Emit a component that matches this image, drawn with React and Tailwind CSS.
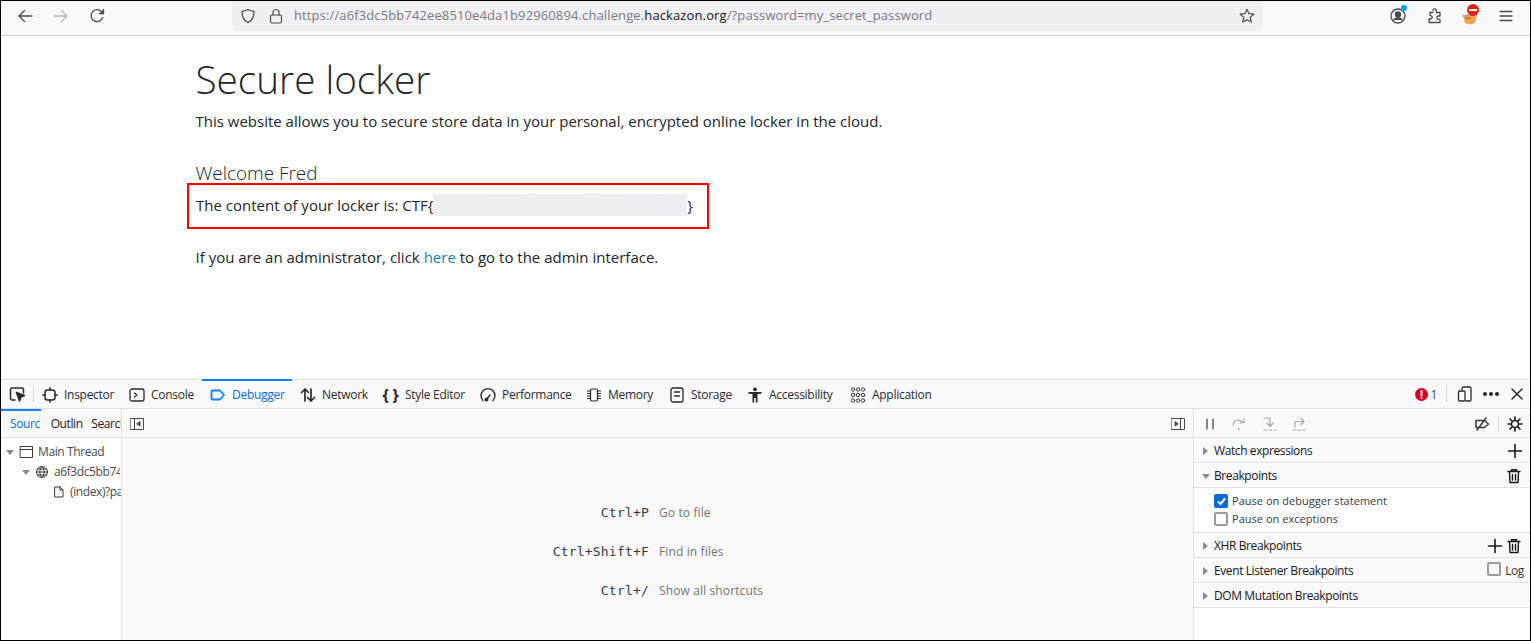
import React from "react";

const S = ({ w = 16, h = 16, c = "#4a4a4f", sw = 1.3, vb, className = "", children }) => (
  <svg width={w} height={h} viewBox={vb || `0 0 ${w} ${h}`} fill="none" stroke={c} strokeWidth={sw} strokeLinecap="round" strokeLinejoin="round" className={`shrink-0 ${className}`}>
    {children}
  </svg>
);

const Tab = ({ icon, label, active, w }) => (
  <div className={`relative flex h-full items-center gap-[5px] shrink-0 pt-[1px] ${active ? "text-[#0a6cd6]" : "text-[#2a2a2e]"}`} style={{ width: w }}>
    {active && <div className="absolute -top-px left-0 right-0 h-[2px] bg-[#0a84ff]" />}
    <div className="ml-[7px] flex w-[17px] justify-center">{icon}</div>
    <span className="ml-[1px] whitespace-nowrap">{label}</span>
  </div>
);

const Arrow = ({ open }) => (
  <svg width="8" height="8" viewBox="0 0 8 8" className="shrink-0">
    {open ? <path d="M0 2h8L4 7z" fill="#8a8a8d" /> : <path d="M1 0v8l5-4z" fill="#8a8a8d" />}
  </svg>
);

const Section = ({ open, label, children, className = "" }) => (
  <div className={`flex h-[25px] items-center border-b border-[#e0e0e2] bg-[#f9f9fa] pl-[8px] pt-[1px] ${className}`}>
    <Arrow open={open} />
    <span className="ml-[4px] flex-1 text-[#18181a]">{label}</span>
    {children}
  </div>
);

const Plus = () => (
  <S w={16} h={16} c="#18181a" sw={1.6}><path d="M8 1.500v13M1.500 8h13" /></S>
);
const Trash = () => (
  <S w={14} h={16} c="#18181a" sw={1.4}>
    <path d="M1 3.500h12M4.500 3V1.800h5V3M2.500 4l.5 10.500h8L11.500 4M5.500 6.500v5.500M8.500 6.500v5.500" />
  </S>
);

const Shortcut = ({ k, d }) => (
  <div className="flex h-[39px] items-center">
    <span className="w-[527px] text-right font-['DejaVu_Sans_Mono',monospace] text-[13px] tracking-[0.2px] text-[#38383d]">{k}</span>
    <span className="ml-[10px] tracking-[0.12px] text-[#737373]">{d}</span>
  </div>
);

export default function App() {
  return (
    <div className="flex h-[641px] w-[1531px] flex-col overflow-hidden border border-black bg-white font-['Open_Sans',sans-serif]">
      {/* browser toolbar */}
      <div className="flex h-[35px] shrink-0 items-start border-b border-[#cfcfd3] bg-[#f9f9fb]">
        <div className="flex h-[30px] items-center pl-[16px]">
          <S><path d="M15 8H2M7.500 2.500 2 8l5.500 5.500" /></S>
          <S c="#b5b5b9" className="ml-[20px]"><path d="M1 8h13M8.500 2.500 14 8l-5.500 5.500" /></S>
          <S className="ml-[20px]"><path d="M13.800 9.500A6 6 0 1 1 12.500 3.500L14 5" /><path d="M14.500 1.500V5.500H10.500" fill="#4a4a4f" /></S>
        </div>
        <div className="ml-[127px] flex h-[30px] w-[1031px] items-center rounded-b-[5px] bg-[#f0f0f4] pl-[8px] pr-[8px]">
          <S><path d="M8 1.500c2 1.200 4 1.700 6 1.800C14 9 12.500 12.800 8 14.700 3.500 12.800 2 9 2 3.300c2-.1 4-.6 6-1.800z" /></S>
          <S className="ml-[12px]" sw={1.2}><rect x="2.500" y="7" width="11" height="8" rx="1.500" /><path d="M5 7V4.500a3 3 0 0 1 6 0V7" /></S>
          <div className="ml-[10px] flex-1 whitespace-nowrap text-[13px] tracking-[0.12px] text-[#7a7a80]">
            https://a6f3dc5bb742ee8510e4da1b92960894.challenge.<span className="text-[#15141a]">hackazon.org</span>/?password=my_secret_password
          </div>
          <S sw={1.2}><path d="M8 1.300l2 4.400 4.800.5-3.600 3.200 1 4.700L8 11.700l-4.200 2.400 1-4.700L1.200 6.200 6 5.700z" /></S>
        </div>
        <div className="flex h-[30px] items-center">
          <div className="relative ml-[127px]">
            <S><circle cx="8" cy="8" r="7" /><circle cx="8" cy="6.500" r="2.500" fill="#4a4a4f" /><path d="M3.800 12c1-1.800 2.500-2.300 4.200-2.300s3.200.5 4.200 2.300" fill="#4a4a4f" /></S>
            <div className="absolute -right-[1px] -top-[3px] h-[6px] w-[6px] rounded-full bg-[#0a9cff]" />
          </div>
          <S className="ml-[21px]"><path d="M6 2.500a1.700 1.700 0 0 1 3.400 0V4.500H13V8h-1.500a1.700 1.700 0 0 0 0 3.400H13v3.100H2V11h1.500a1.700 1.700 0 0 0 0-3.400" /><path d="M3 7.500V4.500h3" /></S>
          <div className="relative ml-[19px] h-[16px] w-[16px]">
            <svg width="16" height="14" viewBox="0 0 16 14" className="absolute left-0 top-[3px]">
              <path d="M1 4l7-1 7 1-2 8-5 1.500L3 12z" fill="#f2a04c" />
              <path d="M0 5l15-1" stroke="#9a9a9a" strokeWidth="0.800" />
              <path d="M4 7h5" stroke="#8a5a2a" strokeWidth="1" />
            </svg>
            <div className="absolute left-[5px] -top-[4px] flex h-[12px] w-[12px] items-center justify-center rounded-full bg-[#e2231a]">
              <div className="h-[2px] w-[8px] bg-white" />
            </div>
          </div>
          <S className="ml-[20px]" c="#4a4a4f" sw={1.3}><path d="M2 3.500h12M2 8h12M2 12.500h12" /></S>
        </div>
      </div>

      {/* page */}
      <div className="h-[343px] shrink-0 bg-white pl-[194.500px] text-[#212529]">
        <h1 className="mt-[16px] text-[38.700px] font-light leading-[54px]">Secure locker</h1>
        <p className="mt-[3px] text-[15px] leading-[24px]">This website allows you to secure store data in your personal, encrypted online locker in the cloud.</p>
        <h4 className="mt-[26px] text-[18.900px] font-light leading-[28px]">Welcome Fred</h4>
        <div className="-ml-[8.500px] mt-[-4px] flex h-[46px] w-[522px] items-center whitespace-nowrap border-2 border-[#ff0000] pb-[2px] pl-[7px] text-[15px]">
          <span>The content of your locker is: CTF{"{"}</span>
          <div className="h-[22px] w-[254px] shrink-0 bg-gradient-to-r from-[#eceef0] via-[#eff0f1] to-[#ebeef2]" />
          <span>{"}"}</span>
        </div>
        <p className="mt-[16px] text-[15px] leading-[24px]">
          If you are an administrator, click <span className="text-[#1084b4]">here</span> to go to the admin interface.
        </p>
      </div>

      {/* devtools */}
      <div className="flex min-h-0 flex-1 flex-col border-t border-[#e0e0e2] bg-[#f9f9fa] text-[12px]">
        <div className="flex h-[29px] shrink-0 items-center border-b border-[#e0e0e2] tracking-[-0.28px]">
          <div className="flex h-full w-[32px] items-center pl-[8px]">
            <S sw={1.5} c="#2a2a2e"><path d="M6 14H3a1.500 1.500 0 0 1-1.500-1.500v-9A1.500 1.500 0 0 1 3 2h10a1.500 1.500 0 0 1 1.500 1.500V7" /><path d="M7.500 6.500l8 3-3.500 1.500-1.500 4z" fill="#2a2a2e" /></S>
          </div>
          <div className="h-[16px] w-px bg-[#d7d7db]" />
          <div className="flex h-full w-[168px]">
            <Tab w={87} label="Inspector" icon={<S c="#2a2a2e" sw={1.500}><rect x="3" y="3" width="10" height="10" rx="2.500" /><path d="M8 .800V3M8 13v2.200M.800 8H3M13 8h2.200" /></S>} />
            <Tab w={81} label="Console" icon={<S c="#2a2a2e" sw={1.300}><rect x="1" y="2" width="14" height="12" rx="2" /><path d="M5.500 6l2.500 2-2.500 2" /></S>} />
          </div>
          <Tab w={90} active label="Debugger" icon={<S c="#0a84ff" sw={1.800}><path d="M2.500 3.500h7.500L14 8l-4 4.500H2.500a1.200 1.200 0 0 1-1-1V4.500a1.200 1.200 0 0 1 1-1z" /></S>} />
          <Tab w={83} label="Network" icon={<S c="#2a2a2e" sw={1.700}><path d="M5 14V2M1.500 5.500 5 2l3.500 3.500M11 2v12M7.500 10.500 11 14l3.500-3.500" /></S>} />
          <Tab w={97} label="Style Editor" icon={<span className="text-[16px] font-bold leading-none text-[#2a2a2e]">{"{ }"}</span>} />
          <Tab w={106} label="Performance" icon={<S c="#2a2a2e" sw={1.400}><path d="M3 13.500A7 7 0 1 1 13 13.500" /><path d="M6.500 12.500 10 8" /><circle cx="6.500" cy="12.500" r="1.300" fill="#2a2a2e" /></S>} />
          <Tab w={83} label="Memory" icon={<S c="#2a2a2e" sw={1.200}><rect x="4.500" y="2" width="7" height="12" rx="1.500" /><path d="M1.500 4h3M1.500 6.500h3M1.500 9h3M1.500 11.500h3M11.500 4h3M11.500 6.500h3M11.500 9h3M11.500 11.500h3" /></S>} />
          <Tab w={78} label="Storage" icon={<S c="#2a2a2e" sw={1.300}><rect x="2" y="1" width="12" height="14" rx="2" /><path d="M5.500 5h5M5.500 9h5" /></S>} />
          <Tab w={103} label="Accessibility" icon={<svg width="16" height="16" viewBox="0 0 16 16" fill="#2a2a2e"><circle cx="8" cy="2.300" r="1.900" /><path d="M1.500 5h13v1.800L10.500 7v8.500H8.800V11H7.200v4.500H5.500V7L1.500 6.800z" /></svg>} />
          <Tab w={90} label="Application" icon={<S c="#2a2a2e" sw={0.900}>{[2.500, 8, 13.500].flatMap((y) => [3, 8, 13].map((x) => <circle key={`${x}-${y}`} cx={x} cy={y} r="1.700" />))}</S>} />
          <div className="flex-1" />
          <div className="mr-[9px] flex items-center pt-[1px]">
            <svg width="13" height="13" viewBox="0 0 13 13" className="shrink-0"><circle cx="6.500" cy="6.500" r="6.500" fill="#d70022" /><path d="M6.500 2.800v4.600" stroke="#fff" strokeWidth="2" strokeLinecap="round" /><circle cx="6.500" cy="10" r="1.100" fill="#fff" /></svg>
            <span className="ml-[2px] text-[#4a4a4f]">1</span>
          </div>
          <div className="h-[16px] w-px bg-[#d7d7db]" />
          <S c="#2a2a2e" sw={1.300} className="ml-[10px]"><path d="M5 3.500V2.500A1.500 1.500 0 0 1 6.500 1h6A1.500 1.500 0 0 1 14 2.500v11a1.500 1.500 0 0 1-1.500 1.500H9" /><rect x="1.500" y="5" width="6.500" height="10" rx="1" /></S>
          <div className="ml-[10px] flex gap-[2px]">
            <div className="h-[4px] w-[4px] rounded-full bg-[#2a2a2e]" /><div className="h-[4px] w-[4px] rounded-full bg-[#2a2a2e]" /><div className="h-[4px] w-[4px] rounded-full bg-[#2a2a2e]" />
          </div>
          <S c="#2a2a2e" sw={1.500} w={12} h={12} className="ml-[12px] mr-[7px]"><path d="M1 1l10 10M11 1 1 11" /></S>
        </div>

        <div className="flex min-h-0 flex-1">
          {/* sources */}
          <div className="flex w-[121px] shrink-0 flex-col border-r border-[#e0e0e2]">
            <div className="relative flex h-[29px] shrink-0 items-center overflow-hidden border-b border-[#e0e0e2] pt-[1px] tracking-[-0.4px]">
              <div className="absolute left-0 top-0 h-[2px] w-[40px] bg-[#0a84ff]" />
              <span className="ml-[9px] w-[41px] overflow-hidden text-[#0a6cd6]">Sourc</span>
              <span className="w-[41px] overflow-hidden text-[#18181a]">Outlin</span>
              <span className="w-[30px] overflow-hidden whitespace-nowrap text-[#18181a]">Search</span>
            </div>
            <div className="flex-1 overflow-hidden bg-white pt-[4px] tracking-[-0.4px] text-[#4a4a4f]">
              <div className="flex h-[20px] items-center pl-[5px]">
                <Arrow open />
                <S sw={1} c="#38383d" className="ml-[5px]"><rect x="1.500" y="2.500" width="12" height="11" /><path d="M1.500 5.500h12" /></S>
                <span className="ml-[3px] whitespace-nowrap">Main Thread</span>
              </div>
              <div className="flex h-[20px] items-center pl-[21px]">
                <Arrow open />
                <S w={14} h={14} sw={1} c="#38383d" className="ml-[5px]"><circle cx="7" cy="7" r="5.500" /><path d="M1.500 7h11M2.500 4h9M2.500 10h9M7 1.500c-3 3.500-3 7.500 0 11M7 1.500c3 3.500 3 7.500 0 11" /></S>
                <span className="ml-[5px] w-[66px] overflow-hidden whitespace-nowrap">a6f3dc5bb742ee</span>
              </div>
              <div className="flex h-[20px] items-center pl-[52px]">
                <S w={12} h={12} sw={1} c="#38383d"><path d="M2 1h5l3 3v7H2zM7 1v3h3" /></S>
                <span className="ml-[5px] w-[51px] overflow-hidden whitespace-nowrap">(index)?password</span>
              </div>
            </div>
          </div>

          {/* center */}
          <div className="flex min-w-0 flex-1 flex-col">
            <div className="flex h-[29px] shrink-0 items-center justify-between border-b border-[#e0e0e2] px-[8px] pt-[1px]">
              <S w={14} h={14} sw={1} c="#4a4a4f"><rect x=".500" y="1.500" width="13" height="11" /><path d="M4.500 1.500v11" /><path d="M10 5v4L7 7z" fill="#4a4a4f" /></S>
              <S w={14} h={14} sw={1} c="#4a4a4f"><rect x=".500" y="1.500" width="13" height="11" /><path d="M9.500 1.500v11" /><path d="M4 5v4l3-2z" fill="#4a4a4f" /></S>
            </div>
            <div className="flex-1 pt-[55px]">
              <Shortcut k="Ctrl+P" d="Go to file" />
              <Shortcut k="Ctrl+Shift+F" d="Find in files" />
              <Shortcut k="Ctrl+/" d="Show all shortcuts" />
            </div>
          </div>

          {/* right */}
          <div className="flex w-[337px] shrink-0 flex-col border-l border-[#e0e0e2] bg-white tracking-[-0.4px]">
            <div className="flex h-[29px] shrink-0 items-center border-b border-[#e0e0e2] bg-[#f9f9fa] pt-[1px]">
              <S w={12} h={14} c="#2a2a2e" sw={1.100} className="ml-[10px]"><path d="M3 2v10M9 2v10" /></S>
              <S c="#a8a8ad" sw={1.200} className="ml-[15px]"><path d="M2 9a5.500 5.500 0 0 1 10-2.500M13 2.500v4.200H9" /><circle cx="7.500" cy="13" r="1" fill="#a8a8ad" stroke="none" /></S>
              <S c="#a8a8ad" sw={1.200} className="ml-[15px]"><path d="M2 2h6v8M5 7l3 3.500L11 7M2 14h3M7 14h3M12 14h2" /></S>
              <S c="#a8a8ad" sw={1.200} className="ml-[14px]"><path d="M3 11V5.500h9M9 2.500l3 3-3 3M1 14h3M6 14h3M11 14h2" /></S>
              <div className="flex-1" />
              <S c="#38383d" sw={1.500}><path d="M2 8V4.500h8.500L14.500 8l-4 3.500H2zM3 14 12 2" /></S>
              <div className="ml-[8px] h-[16px] w-px bg-[#d7d7db]" />
              <S c="#18181a" sw={1.600} className="ml-[8px] mr-[7px]"><circle cx="8" cy="8" r="3.500" /><path d="M8 1v2.500M8 12.500V15M1 8h2.500M12.500 8H15M3 3l1.800 1.800M11.200 11.200 13 13M13 3l-1.800 1.800M4.800 11.200 3 13" /></S>
            </div>
            <Section label="Watch expressions"><Plus /><span className="w-[7px]" /></Section>
            <Section open label="Breakpoints"><Trash /><span className="w-[9px]" /></Section>
            <div className="flex h-[45px] flex-col justify-center gap-[2px] border-b border-[#e0e0e2] pl-[20px] text-[11px] tracking-[0.03px] text-[#38383d]">
              <div className="flex h-[16px] items-center">
                <div className="flex h-[14px] w-[14px] items-center justify-center rounded-[2px] bg-[#0a6cd6]">
                  <svg width="11" height="11" viewBox="0 0 11 11" fill="none" stroke="#fff" strokeWidth="2"><path d="M2 5.500 4.500 8 9 2.500" /></svg>
                </div>
                <span className="ml-[4px]">Pause on debugger statement</span>
              </div>
              <div className="flex h-[16px] items-center">
                <div className="h-[14px] w-[14px] rounded-[2px] border-2 border-[#9a9aa6] bg-white" />
                <span className="ml-[4px]">Pause on exceptions</span>
              </div>
            </div>
            <Section label="XHR Breakpoints"><Plus /><span className="w-[4px]" /><Trash /><span className="w-[9px]" /></Section>
            <Section label="Event Listener Breakpoints">
              <div className="mb-[3px] h-[14px] w-[14px] rounded-[2px] border-2 border-[#9a9aa6] bg-white" />
              <span className="ml-[4px] mr-[6px] text-[#38383d]">Log</span>
            </Section>
            <Section label="DOM Mutation Breakpoints" />
          </div>
        </div>
      </div>
    </div>
  );
}
